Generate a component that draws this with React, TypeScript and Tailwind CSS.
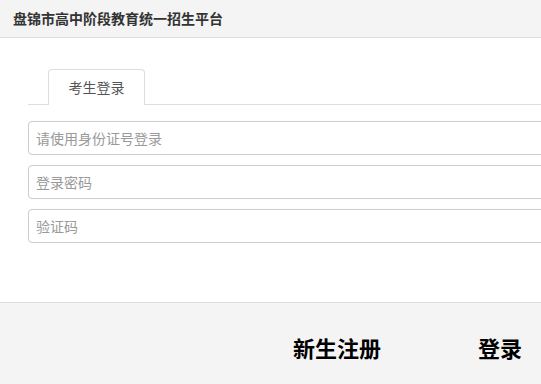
const font = { fontFamily: '"Microsoft YaHei", "Noto Sans CJK SC", sans-serif' }

function Field({ placeholder }: { placeholder: string }) {
  return (
    <input
      placeholder={placeholder}
      className="h-[34px] w-[620px] rounded-[4px] border border-[#cccccc] bg-white px-[7px] text-[14px] text-[#555] outline-none placeholder:text-[#999]"
    />
  )
}

export default function App() {
  return (
    <div className="h-[384px] w-[541px] overflow-hidden bg-white" style={font}>
      <div className="flex h-[38px] items-center border-b border-[#dddddd] bg-[#f4f4f4] pl-[13px]">
        <h1 className="text-[14px] font-bold text-[#333]">盘锦市高中阶段教育统一招生平台</h1>
      </div>

      <div className="h-[264px] pl-[28px] pt-[31px]">
        <div className="flex w-[700px] border-b border-[#dddddd] pl-[20px]">
          <div className="-mb-px flex h-[36px] w-[97px] items-center justify-center rounded-t-[4px] border border-b-0 border-[#dddddd] bg-white text-[14px] text-[#555]">
            考生登录
          </div>
        </div>
        <div className="mt-[16px] flex flex-col gap-[10px]">
          <Field placeholder="请使用身份证号登录" />
          <Field placeholder="登录密码" />
          <Field placeholder="验证码" />
        </div>
      </div>

      <div className="flex h-[82px] items-center border-t border-[#dddddd] bg-[#f4f4f4] pl-[293px] pt-[8px]">
        <button className="text-[22px] font-bold text-black">新生注册</button>
        <button className="ml-[97px] text-[22px] font-bold text-black">登录</button>
      </div>
    </div>
  )
}
